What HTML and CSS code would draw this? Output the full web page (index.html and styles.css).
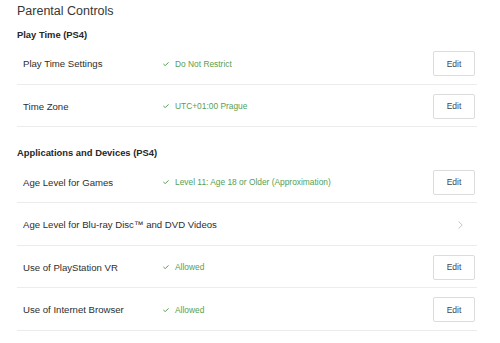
FILE: index.html
```html
<!DOCTYPE html>
<html lang="en">
<head>
<meta charset="utf-8">
<title>Parental Controls</title>
<link rel="stylesheet" href="styles.css">
</head>
<body>
<main class="page">
  <h1 class="title">Parental Controls</h1>

  <section class="section">
    <h2 class="section-title">Play Time (PS4)</h2>
    <div class="row">
      <span class="label">Play Time Settings</span>
      <span class="status"><svg class="check" viewBox="0 0 6 4" width="6" height="4"><path d="M0.4 2 L2.2 3.6 L5.6 0.4" /></svg>Do Not Restrict</span>
      <button class="edit">Edit</button>
    </div>
    <div class="row">
      <span class="label">Time Zone</span>
      <span class="status"><svg class="check" viewBox="0 0 6 4" width="6" height="4"><path d="M0.4 2 L2.2 3.6 L5.6 0.4" /></svg>UTC+01:00 Prague</span>
      <button class="edit">Edit</button>
    </div>
  </section>

  <section class="section section-2">
    <h2 class="section-title">Applications and Devices (PS4)</h2>
    <div class="row">
      <span class="label">Age Level for Games</span>
      <span class="status"><svg class="check" viewBox="0 0 6 4" width="6" height="4"><path d="M0.4 2 L2.2 3.6 L5.6 0.4" /></svg>Level 11: Age 18 or Older (Approximation)</span>
      <button class="edit">Edit</button>
    </div>
    <div class="row">
      <span class="label label-wide">Age Level for Blu-ray Disc™ and DVD Videos</span>
      <svg class="chevron" viewBox="0 0 5 8" width="5" height="8"><path d="M0.6 0.5 L4.2 4 L0.6 7.5" /></svg>
    </div>
    <div class="row">
      <span class="label">Use of PlayStation VR</span>
      <span class="status"><svg class="check" viewBox="0 0 6 4" width="6" height="4"><path d="M0.4 2 L2.2 3.6 L5.6 0.4" /></svg>Allowed</span>
      <button class="edit">Edit</button>
    </div>
    <div class="row">
      <span class="label">Use of Internet Browser</span>
      <span class="status"><svg class="check" viewBox="0 0 6 4" width="6" height="4"><path d="M0.4 2 L2.2 3.6 L5.6 0.4" /></svg>Allowed</span>
      <button class="edit">Edit</button>
    </div>
  </section>
</main>
</body>
</html>
```

FILE: styles.css
```css
html, body {
  margin: 0;
  padding: 0;
  background: #ffffff;
}

body {
  font-family: "Liberation Sans", Arial, sans-serif;
  color: #333333;
}

.page {
  padding: 1px 23px 0 17px;
}

.title {
  margin: 0;
  font-size: 12.5px;
  line-height: 20px;
  font-weight: normal;
  color: #363636;
}

.section-title {
  margin: 7px 0 0;
  font-size: 9.4px;
  line-height: 14px;
  font-weight: bold;
  color: #262626;
}

.section-2 {
  margin-top: 18.5px;
}

.section-2 .section-title {
  margin: 0 0 1px;
}

.row {
  box-sizing: border-box;
  height: 42.5px;
  display: grid;
  grid-template-columns: 140px 1fr auto;
  align-items: center;
  padding: 2px 2px 0 6px;
  border-bottom: 1px solid #ececec;
}

.label {
  font-size: 9.6px;
  color: #2e2e2e;
}

.label-wide {
  grid-column: 1 / 3;
}

.status {
  display: flex;
  align-items: center;
  font-size: 8.4px;
  color: #55a055;
}

.check {
  margin-right: 6px;
  fill: none;
  stroke: #55a055;
  stroke-width: 1;
}

.edit {
  width: 42px;
  height: 25px;
  padding: 0;
  border: 1px solid #dcdcdc;
  border-radius: 2px;
  background: #ffffff;
  font-family: "Liberation Sans", Arial, sans-serif;
  font-size: 8.5px;
  color: #444444;
}

.chevron {
  margin-right: 12px;
  fill: none;
  stroke: #bdbdbd;
  stroke-width: 0.9;
}
```
